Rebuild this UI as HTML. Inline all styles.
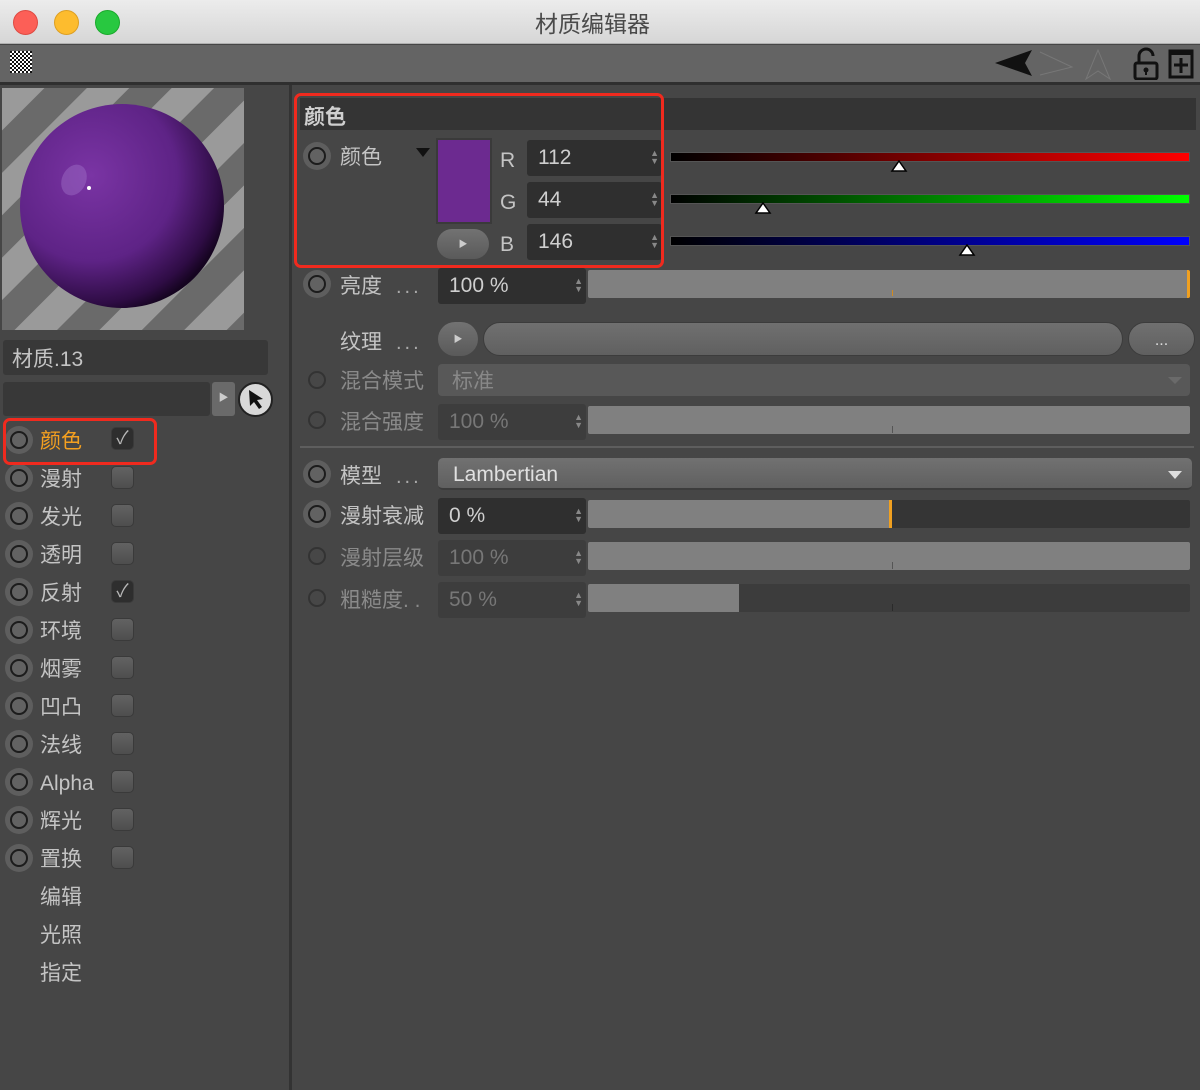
<!DOCTYPE html>
<html><head><meta charset="utf-8"><style>
*{box-sizing:border-box;margin:0;padding:0}
body{width:1200px;height:1090px;background:#464646;font-family:"Liberation Sans","Noto Sans CJK SC",sans-serif;color:#c8c8c8;position:relative;overflow:hidden}
.a{position:absolute}
.t{position:absolute;font-size:21px;line-height:24px;color:#c4c4c4;white-space:nowrap;margin-top:2px}
.dim{color:#8a8a8a}
.rad{position:absolute;width:28px;height:28px;border-radius:50%;background:#5e5e5e}
.rad::after{content:"";position:absolute;left:5px;top:5px;width:18px;height:18px;border-radius:50%;border:2px solid #1c1c1c;background:#626262;box-sizing:border-box}
.rad.d{background:none}.rad.d::after{border-color:#333;background:#474747}
.cb{position:absolute;width:23px;height:23px;border-radius:5px;background:linear-gradient(#626262,#4e4e4e);border:1px solid #3a3a3a}
.cb.on{background:#2e2e2e;color:#b8b8b8;font-size:18px;line-height:21px;text-align:center}
.fld{position:absolute;background:#2f2f2f;border-radius:3px;font-size:21px;line-height:36px;padding-left:11px;color:#cfcfcf}
.fld.dim{background:#3d3d3d;color:#777}
.arr{position:absolute;right:3px;top:9px;font-size:9px;line-height:8px;color:#888}
.bar{position:absolute;background:#808080;border-radius:2px}
.dots{position:absolute;font-size:20px;color:#aaa;letter-spacing:3px;margin-top:2px}
</style></head><body>
<div class="a" style="left:0;top:0;width:1200px;height:44px;background:linear-gradient(#ececec,#d6d6d6);border-bottom:1px solid #b0b0b0"></div>
<div class="a" style="left:13px;top:10px;width:25px;height:25px;border-radius:50%;background:#fc5f57;border:1px solid #de4a42"></div>
<div class="a" style="left:54px;top:10px;width:25px;height:25px;border-radius:50%;background:#fdbc2e;border:1px solid #dd9f22"></div>
<div class="a" style="left:95px;top:10px;width:25px;height:25px;border-radius:50%;background:#28c840;border:1px solid #1aaa2c"></div>
<div class="t" style="left:535px;top:10px;color:#4a4a4a;font-size:23px">材质编辑器</div>
<div class="a" style="left:0;top:45px;width:1200px;height:37px;background:#646464"></div>
<div class="a" style="left:0;top:82px;width:1200px;height:3px;background:#2f2f2f"></div>
<div class="a" style="left:10px;top:51px;width:22px;height:22px;background:repeating-conic-gradient(#fff 0 25%,#111 0 50%) 0 0/4px 4px"></div>
<svg class="a" style="left:990px;top:46px" width="210" height="34">
<path d="M5 17 L42 4 L35 17 L42 30 Z" fill="#111"/>
<path d="M50 6 L82 21 L50 29" fill="none" stroke="#777" stroke-width="1"/>
<path d="M108 4 L96 33 L108 25 L120 33 Z" fill="none" stroke="#777" stroke-width="1"/>
<rect x="145" y="17" width="22" height="16" rx="2" fill="none" stroke="#111" stroke-width="3"/>
<path d="M149 17 V10 a7 7 0 0 1 14 0" fill="none" stroke="#111" stroke-width="3"/>
<circle cx="156" cy="24" r="2.5" fill="#111"/><rect x="155" y="24" width="2" height="5" fill="#111"/>
<rect x="180" y="5" width="22" height="26" fill="none" stroke="#111" stroke-width="3"/>
<rect x="180" y="5" width="22" height="4" fill="#111"/>
<path d="M191 12 V27 M184 19 H198" stroke="#111" stroke-width="3"/>
</svg>
<div class="a" style="left:289px;top:85px;width:3px;height:1005px;background:#333"></div>
<svg class="a" style="left:2px;top:88px" width="242" height="242">
<defs><pattern id="st" width="60" height="60" patternUnits="userSpaceOnUse" patternTransform="rotate(45)"><rect width="30" height="60" fill="#9a9a9a"/><rect x="30" width="30" height="60" fill="#6a6a6a"/></pattern>
<radialGradient id="sp" cx="0.35" cy="0.35" r="0.7"><stop offset="0" stop-color="#7a34a4"/><stop offset="0.6" stop-color="#5e2386"/><stop offset="0.9" stop-color="#2e0c44"/><stop offset="1" stop-color="#150420"/></radialGradient></defs>
<rect width="242" height="242" fill="url(#st)"/>
<ellipse cx="120" cy="118" rx="102" ry="102" fill="url(#sp)"/>
<circle cx="87" cy="100" r="2" fill="#fff"/>
<ellipse cx="72" cy="92" rx="12" ry="16" fill="#a070c8" opacity="0.45" transform="rotate(25 72 92)"/>
</svg>
<div class="a" style="left:3px;top:340px;width:265px;height:35px;background:#383838;border-radius:3px"></div>
<div class="t" style="left:12px;top:346px">材质.13</div>
<div class="a" style="left:3px;top:382px;width:207px;height:34px;background:#383838;border-radius:3px"></div>
<div class="a" style="left:212px;top:382px;width:23px;height:34px;background:#6a6a6a;border-radius:3px;color:#ccc;font-size:10px;line-height:34px;text-align:center">▶</div>
<div class="a" style="left:238px;top:382px;width:35px;height:35px;border-radius:50%;background:#d8d8d8;border:2px solid #222"></div>
<svg class="a" style="left:244px;top:387px" width="24" height="24"><path d="M5 3 L19 12 L13 13 L18 20 L15 22 L10 15 L6 19 Z" fill="#111"/></svg>

<div class="rad" style="left:5px;top:426px"></div><div class="t" style="left:40px;top:428px;color:#f4a020">颜色</div><div class="cb on" style="left:111px;top:427px">✓</div>
<div class="rad" style="left:5px;top:464px"></div><div class="t" style="left:40px;top:466px">漫射</div><div class="cb" style="left:111px;top:466px"></div>
<div class="rad" style="left:5px;top:502px"></div><div class="t" style="left:40px;top:504px">发光</div><div class="cb" style="left:111px;top:504px"></div>
<div class="rad" style="left:5px;top:540px"></div><div class="t" style="left:40px;top:542px">透明</div><div class="cb" style="left:111px;top:542px"></div>
<div class="rad" style="left:5px;top:578px"></div><div class="t" style="left:40px;top:580px">反射</div><div class="cb on" style="left:111px;top:580px">✓</div>
<div class="rad" style="left:5px;top:616px"></div><div class="t" style="left:40px;top:618px">环境</div><div class="cb" style="left:111px;top:618px"></div>
<div class="rad" style="left:5px;top:654px"></div><div class="t" style="left:40px;top:656px">烟雾</div><div class="cb" style="left:111px;top:656px"></div>
<div class="rad" style="left:5px;top:692px"></div><div class="t" style="left:40px;top:694px">凹凸</div><div class="cb" style="left:111px;top:694px"></div>
<div class="rad" style="left:5px;top:730px"></div><div class="t" style="left:40px;top:732px">法线</div><div class="cb" style="left:111px;top:732px"></div>
<div class="rad" style="left:5px;top:768px"></div><div class="t" style="left:40px;top:770px">Alpha</div><div class="cb" style="left:111px;top:770px"></div>
<div class="rad" style="left:5px;top:806px"></div><div class="t" style="left:40px;top:808px">辉光</div><div class="cb" style="left:111px;top:808px"></div>
<div class="rad" style="left:5px;top:844px"></div><div class="t" style="left:40px;top:846px">置换</div><div class="cb" style="left:111px;top:846px"></div>
<div class="t" style="left:40px;top:884px">编辑</div>
<div class="t" style="left:40px;top:922px">光照</div>
<div class="t" style="left:40px;top:960px">指定</div>
<div class="a" style="left:3px;top:418px;width:154px;height:47px;border:3px solid #f02a1e;border-radius:7px"></div>

<div class="a" style="left:300px;top:98px;width:896px;height:32px;background:#343434"></div>
<div class="t" style="left:304px;top:104px;font-weight:bold;color:#cfcfcf">颜色</div>
<div class="rad" style="left:303px;top:142px"></div><div class="t" style="left:340px;top:144px">颜色</div>
<div class="a" style="left:416px;top:148px;width:0;height:0;border-left:7px solid transparent;border-right:7px solid transparent;border-top:9px solid #111"></div>
<div class="a" style="left:436px;top:138px;width:56px;height:86px;background:#6c2a90;border:2px solid #3a3a3a"></div>
<div class="a" style="left:437px;top:229px;width:52px;height:30px;border-radius:15px;background:linear-gradient(#727272,#5a5a5a);color:#ccc;font-size:9px;line-height:30px;text-align:center">▶</div>
<div class="t" style="left:500px;top:147px">R</div><div class="t" style="left:500px;top:189px">G</div><div class="t" style="left:500px;top:231px">B</div>
<div class="fld" style="left:527px;top:140px;width:135px">112<span class="arr">▲<br>▼</span></div>
<div class="fld" style="left:527px;top:182px;width:135px">44<span class="arr">▲<br>▼</span></div>
<div class="fld" style="left:527px;top:224px;width:135px">146<span class="arr">▲<br>▼</span></div>
<div class="a" style="left:670px;top:152px;width:520px;height:10px;background:linear-gradient(90deg,#000,#f00);border:1px solid #555"></div>
<div class="a" style="left:670px;top:194px;width:520px;height:10px;background:linear-gradient(90deg,#000,#0f0);border:1px solid #555"></div>
<div class="a" style="left:670px;top:236px;width:520px;height:10px;background:linear-gradient(90deg,#000,#00f);border:1px solid #555"></div>
<svg class="a" style="left:890px;top:160px" width="18" height="12"><path d="M9 1 L16 11 H2 Z" fill="#fff" stroke="#000" stroke-width="1.5"/></svg>
<svg class="a" style="left:754px;top:202px" width="18" height="12"><path d="M9 1 L16 11 H2 Z" fill="#fff" stroke="#000" stroke-width="1.5"/></svg>
<svg class="a" style="left:958px;top:244px" width="18" height="12"><path d="M9 1 L16 11 H2 Z" fill="#fff" stroke="#000" stroke-width="1.5"/></svg>
<div class="a" style="left:294px;top:93px;width:370px;height:175px;border:3px solid #f02a1e;border-radius:7px"></div>

<div class="rad" style="left:303px;top:270px"></div><div class="t" style="left:340px;top:273px">亮度</div><div class="dots" style="left:396px;top:274px">...</div>
<div class="fld" style="left:438px;top:268px;width:148px">100 %<span class="arr">▲<br>▼</span></div>
<div class="bar" style="left:588px;top:270px;width:602px;height:28px;border-right:3px solid #f0a020"></div>
<div class="a" style="left:892px;top:290px;width:1px;height:6px;background:#d08a20"></div>

<div class="t" style="left:340px;top:329px">纹理</div><div class="dots" style="left:396px;top:330px">...</div>
<div class="a" style="left:438px;top:322px;width:40px;height:34px;border-radius:17px;background:linear-gradient(#727272,#5a5a5a);color:#ccc;font-size:9px;line-height:34px;text-align:center">▶</div>
<div class="a" style="left:483px;top:322px;width:640px;height:34px;border-radius:17px;background:linear-gradient(#707070,#606060);border:1px solid #3c3c3c"></div>
<div class="a" style="left:1128px;top:322px;width:67px;height:34px;border-radius:17px;background:linear-gradient(#707070,#606060);border:1px solid #3c3c3c;color:#ddd;font-size:16px;text-align:center;line-height:36px">...</div>

<div class="rad d" style="left:303px;top:366px"></div><div class="t dim" style="left:340px;top:368px">混合模式</div>
<div class="a" style="left:438px;top:364px;width:752px;height:32px;background:#585858;border-radius:4px"></div>
<div class="t" style="left:452px;top:368px;color:#888">标准</div>
<div class="a" style="left:1168px;top:377px;border-left:7px solid transparent;border-right:7px solid transparent;border-top:7px solid #6a6a6a"></div>

<div class="rad d" style="left:303px;top:406px"></div><div class="t dim" style="left:340px;top:409px">混合强度</div>
<div class="fld dim" style="left:438px;top:404px;width:148px">100 %<span class="arr">▲<br>▼</span></div>
<div class="bar" style="left:588px;top:406px;width:602px;height:28px"></div>
<div class="a" style="left:892px;top:426px;width:1px;height:7px;background:#555"></div>

<div class="a" style="left:300px;top:446px;width:894px;height:2px;background:#5e5e5e"></div>

<div class="rad" style="left:303px;top:460px"></div><div class="t" style="left:340px;top:463px">模型</div><div class="dots" style="left:396px;top:464px">...</div>
<div class="a" style="left:438px;top:458px;width:754px;height:32px;background:linear-gradient(#717171,#606060);border-radius:5px;border-bottom:2px solid #3c3c3c"></div>
<div class="t" style="left:453px;top:461px;color:#e0e0e0">Lambertian</div>
<div class="a" style="left:1168px;top:471px;border-left:7px solid transparent;border-right:7px solid transparent;border-top:8px solid #ddd"></div>

<div class="rad" style="left:303px;top:500px"></div><div class="t" style="left:340px;top:503px">漫射衰减</div>
<div class="fld" style="left:438px;top:498px;width:148px">0 %<span class="arr">▲<br>▼</span></div>
<div class="a" style="left:588px;top:500px;width:602px;height:28px;background:#353535;border-radius:2px"></div>
<div class="bar" style="left:588px;top:500px;width:304px;height:28px;border-right:3px solid #f0a020;border-radius:2px 0 0 2px"></div>

<div class="rad d" style="left:303px;top:542px"></div><div class="t dim" style="left:340px;top:545px">漫射层级</div>
<div class="fld dim" style="left:438px;top:540px;width:148px">100 %<span class="arr">▲<br>▼</span></div>
<div class="bar" style="left:588px;top:542px;width:602px;height:28px"></div>
<div class="a" style="left:892px;top:562px;width:1px;height:7px;background:#555"></div>

<div class="rad d" style="left:303px;top:584px"></div><div class="t dim" style="left:340px;top:587px">粗糙度. .</div>
<div class="fld dim" style="left:438px;top:582px;width:148px">50 %<span class="arr">▲<br>▼</span></div>
<div class="a" style="left:588px;top:584px;width:602px;height:28px;background:#3c3c3c;border-radius:2px"></div>
<div class="bar" style="left:588px;top:584px;width:151px;height:28px;border-radius:2px 0 0 2px"></div>
<div class="a" style="left:892px;top:604px;width:1px;height:7px;background:#2a2a2a"></div>
</body></html>
